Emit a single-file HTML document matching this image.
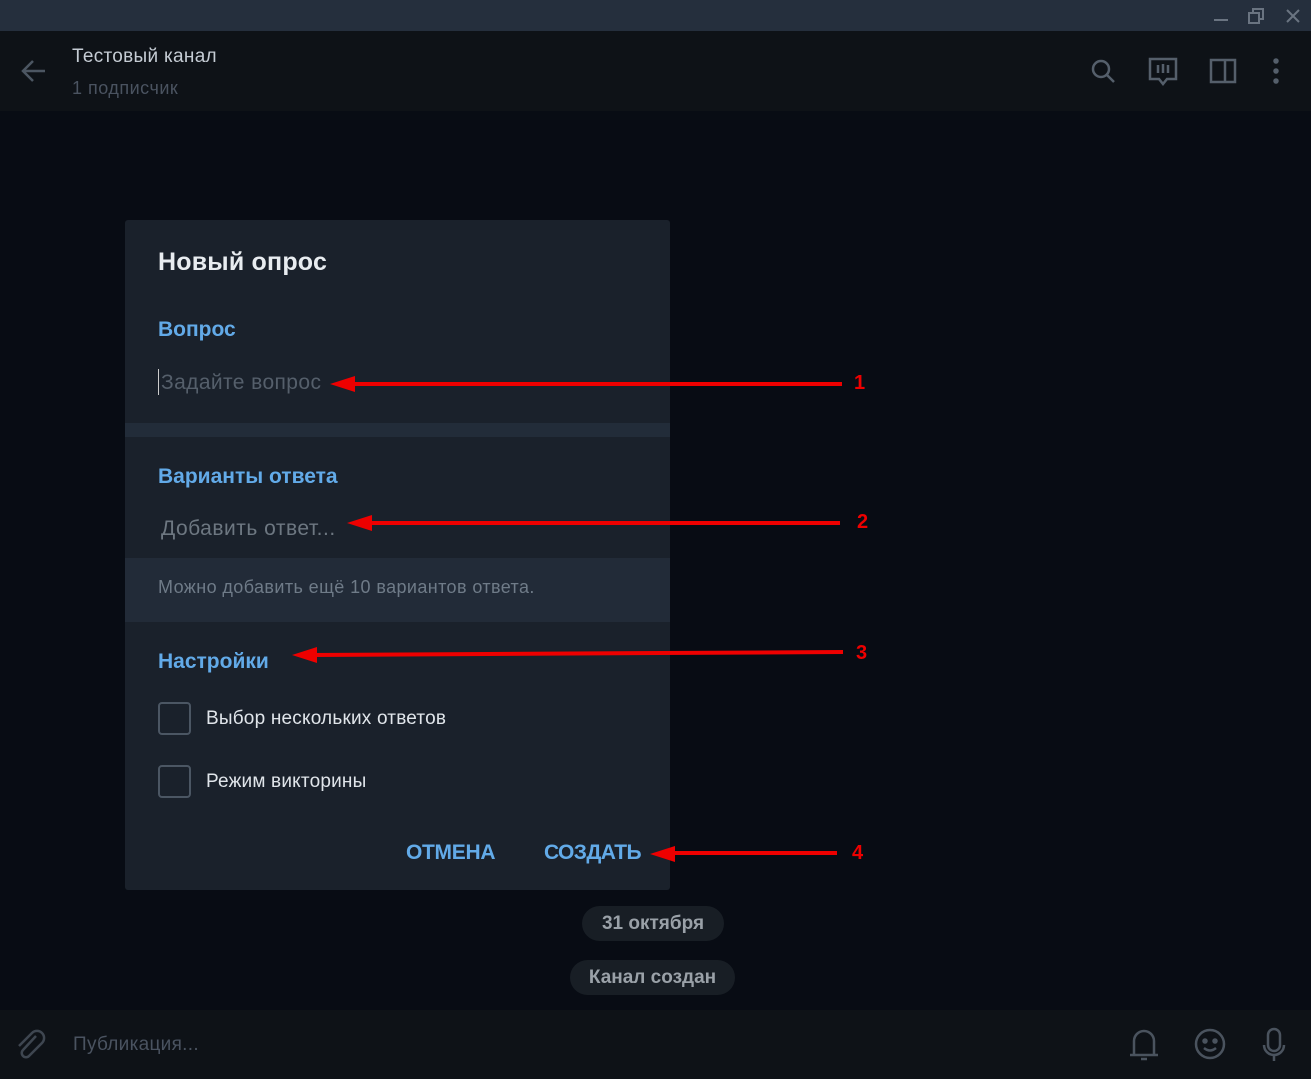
<!DOCTYPE html>
<html><head><meta charset="utf-8"><style>
*{margin:0;padding:0;box-sizing:border-box}
body{width:1311px;height:1079px;background:#080c14;font-family:"Liberation Sans",sans-serif;position:relative;overflow:hidden}
.a{position:absolute;white-space:nowrap}
</style></head><body>
<div class="a" style="left:0;top:0;width:1311px;height:31px;background:#252f3d"></div>
<div class="a" style="left:0;top:31px;width:1311px;height:80px;background:#0e1217"></div>
<div class="a" style="left:0;top:1010px;width:1311px;height:69px;background:#0e1217"></div>
<svg class="a" style="left:1205px;top:5px" width="106" height="22" stroke="#6a7481" stroke-width="2" fill="none">
<path d="M9 15h14"/><rect x="44" y="8" width="10" height="10"/><path d="M48 8V4h10v10h-4"/><path d="M82 5l12 12M94 5L82 17"/></svg>
<svg class="a" style="left:20px;top:57px" width="28" height="28" stroke="#4c5662" stroke-width="2.5" fill="none"><path d="M25 14H4M13 4L3 14l10 10"/></svg>
<div class="a" style="left:72px;top:46px;color:#c5ccd4;font-size:19px;letter-spacing:0.3px">Тестовый канал</div>
<div class="a" style="left:72px;top:78px;color:#4a5360;font-size:18px;letter-spacing:0.5px">1 подписчик</div>
<svg class="a" style="left:1085px;top:55px" width="205" height="34" stroke="#555f6b" stroke-width="2.5" fill="none">
<circle cx="16" cy="14" r="8"/><path d="M22 20l7 7"/>
<path d="M65 4h26v20h-9l-4 5-4-5h-9z"/><path d="M73 10v8M78 9v9M83 10v8"/>
<rect x="126" y="5" width="24" height="22"/><path d="M140 5v22"/>
<circle cx="191" cy="6" r="1.5" fill="#555f6b"/><circle cx="191" cy="16" r="1.5" fill="#555f6b"/><circle cx="191" cy="26" r="1.5" fill="#555f6b"/></svg>
<div class="a" style="left:125px;top:220px;width:545px;height:670px;background:#1a212b;border-radius:3px"></div>
<div class="a" style="left:125px;top:423px;width:545px;height:14px;background:#222c39"></div>
<div class="a" style="left:125px;top:558px;width:545px;height:64px;background:#222b38"></div>
<div class="a" style="left:158px;top:248px;color:#e8ecf0;font-size:25px;font-weight:bold;letter-spacing:0.2px">Новый опрос</div>
<div class="a" style="left:158px;top:318px;color:#62aae8;font-size:21px;font-weight:bold">Вопрос</div>
<div class="a" style="left:158px;top:369px;width:1px;height:26px;background:#ccc"></div>
<div class="a" style="left:161px;top:371px;color:#555f6b;font-size:21px;letter-spacing:0.4px">Задайте вопрос</div>
<div class="a" style="left:158px;top:465px;color:#62aae8;font-size:21px;font-weight:bold">Варианты ответа</div>
<div class="a" style="left:161px;top:517px;color:#6d7781;font-size:21px;letter-spacing:0.5px">Добавить ответ...</div>
<div class="a" style="left:158px;top:577px;color:#6f7b88;font-size:18px;letter-spacing:0.4px">Можно добавить ещё 10 вариантов ответа.</div>
<div class="a" style="left:158px;top:650px;color:#62aae8;font-size:21px;font-weight:bold">Настройки</div>
<div class="a" style="left:158px;top:702px;width:33px;height:33px;border:2.5px solid #4b5663;border-radius:4px"></div>
<div class="a" style="left:158px;top:765px;width:33px;height:33px;border:2.5px solid #4b5663;border-radius:4px"></div>
<div class="a" style="left:206px;top:708px;color:#e0e5ea;font-size:19px;letter-spacing:0.2px">Выбор нескольких ответов</div>
<div class="a" style="left:206px;top:771px;color:#e0e5ea;font-size:19px;letter-spacing:0.2px">Режим викторины</div>
<div class="a" style="left:406px;top:841px;color:#62aae8;font-size:21px;font-weight:bold;letter-spacing:-0.3px">ОТМЕНА</div>
<div class="a" style="left:544px;top:841px;color:#62aae8;font-size:21px;font-weight:bold;letter-spacing:-0.6px">СОЗДАТЬ</div>
<div class="a" style="left:582px;top:906px;width:142px;height:35px;border-radius:18px;background:#181e25;color:#9aa1a8;font-size:19px;text-align:center;line-height:35px;font-weight:bold">31 октября</div>
<div class="a" style="left:570px;top:960px;width:165px;height:35px;border-radius:18px;background:#181e25;color:#9aa1a8;font-size:19px;text-align:center;line-height:35px;font-weight:bold">Канал создан</div>
<svg class="a" style="left:0;top:0" width="1311" height="1079">
<g stroke="#ee0000" stroke-width="4" fill="#ee0000">
<path d="M842 384H350"/><path d="M330 384l25-8v16z" stroke="none"/>
<path d="M840 523H367"/><path d="M347 523l25-8v16z" stroke="none"/>
<path d="M843 652L312 655"/><path d="M292 655l25-8v16z" stroke="none"/>
<path d="M837 853H670"/><path d="M650 854l25-8v16z" stroke="none"/>
</g>
<g fill="#ee0000" font-family="Liberation Sans" font-size="20" font-weight="bold">
<text x="854" y="389">1</text><text x="857" y="528">2</text><text x="856" y="659">3</text><text x="852" y="859">4</text></g>
</svg>
<svg class="a" style="left:14px;top:1028px" width="34" height="34" stroke="#3e4650" stroke-width="2.5" fill="none"><path d="M22 8L9 22a4 4 0 0 0 6 6l13-13a7 7 0 0 0-10-10L5 18"/></svg>
<div class="a" style="left:73px;top:1034px;color:#4a5360;font-size:19px;letter-spacing:0.3px">Публикация...</div>
<svg class="a" style="left:1125px;top:1025px" width="170" height="40" stroke="#4a535e" stroke-width="2.5" fill="none">
<path d="M9 30V16a10 10 0 0 1 20 0v14zM5 30h28M16 34h6"/>
<circle cx="85" cy="19" r="14"/><circle cx="80" cy="16" r="1.5" fill="#4a535e"/><circle cx="90" cy="16" r="1.5" fill="#4a535e"/><path d="M79 23q6 5 12 0"/>
<rect x="143" y="4" width="12" height="22" rx="6"/><path d="M139 20a10 10 0 0 0 20 0M149 30v6"/>
</svg>
</body></html>
